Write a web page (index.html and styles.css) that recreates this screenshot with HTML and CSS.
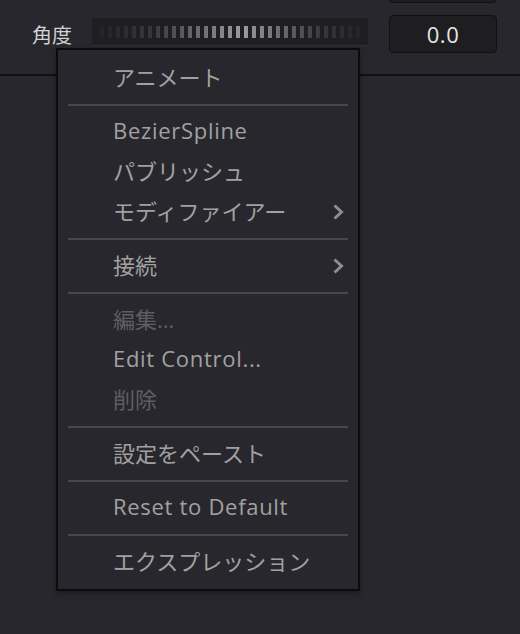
FILE: index.html
```html
<!DOCTYPE html>
<html lang="ja">
<head>
<meta charset="utf-8">
<link rel="stylesheet" href="styles.css">
</head>
<body>
<div class="panel">
  <div class="row row-prev">
    <div class="label"></div>
    <div class="spacer"></div>
    <div class="value-box"></div>
  </div>
  <div class="row">
    <div class="label">角度</div>
    <div class="slider"><div class="ticks"></div></div>
    <div class="value-box">0.0</div>
  </div>
</div>

<div class="menu">
  <div class="item">アニメート</div>
  <div class="sep"></div>
  <div class="item latin">BezierSpline</div>
  <div class="item">パブリッシュ</div>
  <div class="item has-sub">モディファイアー
    <svg class="chev" width="12" height="18" viewBox="0 0 12 18"><path d="M2.5 2.5 L9.5 9 L2.5 15.5" fill="none" stroke="currentColor" stroke-width="3" stroke-linejoin="miter"/></svg>
  </div>
  <div class="sep"></div>
  <div class="item has-sub">接続
    <svg class="chev" width="12" height="18" viewBox="0 0 12 18"><path d="M2.5 2.5 L9.5 9 L2.5 15.5" fill="none" stroke="currentColor" stroke-width="3" stroke-linejoin="miter"/></svg>
  </div>
  <div class="sep"></div>
  <div class="item disabled">編集...</div>
  <div class="item latin">Edit Control...</div>
  <div class="item disabled">削除</div>
  <div class="sep"></div>
  <div class="item">設定をペースト</div>
  <div class="sep"></div>
  <div class="item latin">Reset to Default</div>
  <div class="sep"></div>
  <div class="item">エクスプレッション</div>
</div>
</body>
</html>
```

FILE: styles.css
```css
html, body {
  margin: 0;
  padding: 0;
  background: #28272d;
  width: 520px;
  height: 634px;
  overflow: hidden;
  font-family: "Open Sans", "Noto Sans CJK JP", sans-serif;
}

.panel {
  display: flow-root;
  height: 74px;
  border-bottom: 2px solid #111113;
}

.row {
  display: flex;
  align-items: center;
  height: 38px;
  padding-left: 32px;
}

.row-prev {
  margin-top: -35px;
  margin-bottom: 12px;
}

.label {
  width: 60px;
  font-family: "Noto Sans CJK JP", sans-serif;
  font-size: 20px;
  color: #d2d2d2;
  line-height: 1;
  padding-top: 1px;
}

.spacer {
  width: 276px;
}

.slider {
  width: 276px;
  height: 27px;
  margin-bottom: 4px;
  background: #1f1f21;
  border-bottom: 1px solid #323236;
}

.ticks {
  margin: 8px 0 0 8px;
  width: 260px;
  height: 12px;
  background: linear-gradient(to right, #232325 0%, #38383a 20%, #777777 42%, #9c9c9c 55%, #6a6a6a 70%, #38383a 85%, #242426 100%);
  -webkit-mask-image: repeating-linear-gradient(to right, #000 0 4px, transparent 4px 8px);
  mask-image: repeating-linear-gradient(to right, #000 0 4px, transparent 4px 8px);
}

.value-box {
  margin-left: 21px;
  width: 106px;
  height: 36px;
  background: #1e1e20;
  border: 1px solid #111;
  border-radius: 4px;
  color: #e6e6e6;
  font-size: 22px;
  letter-spacing: 0.5px;
  display: flex;
  align-items: center;
  justify-content: center;
}

.menu {
  position: absolute;
  left: 56px;
  top: 48px;
  width: 300px;
  background: #28272d;
  border: 2px solid #0c0c0d;
  padding: 8px 0 7px;
  box-shadow: 0 2px 6px rgba(0,0,0,0.35);
}

.item {
  height: 40px;
  box-sizing: border-box;
  display: flex;
  align-items: center;
  padding: 0 14px 4px 55px;
  font-size: 22px;
  color: #a1a1a1;
  white-space: nowrap;
}

.item.latin {
  letter-spacing: 0.7px;
}

.item.disabled {
  color: #5e5e62;
}

.has-sub {
  justify-content: space-between;
}

.chev {
  color: #8e8e8e;
  margin-top: 4px;
}

.sep {
  height: 2px;
  margin: 6px 10px;
  background: #46464b;
}
```
